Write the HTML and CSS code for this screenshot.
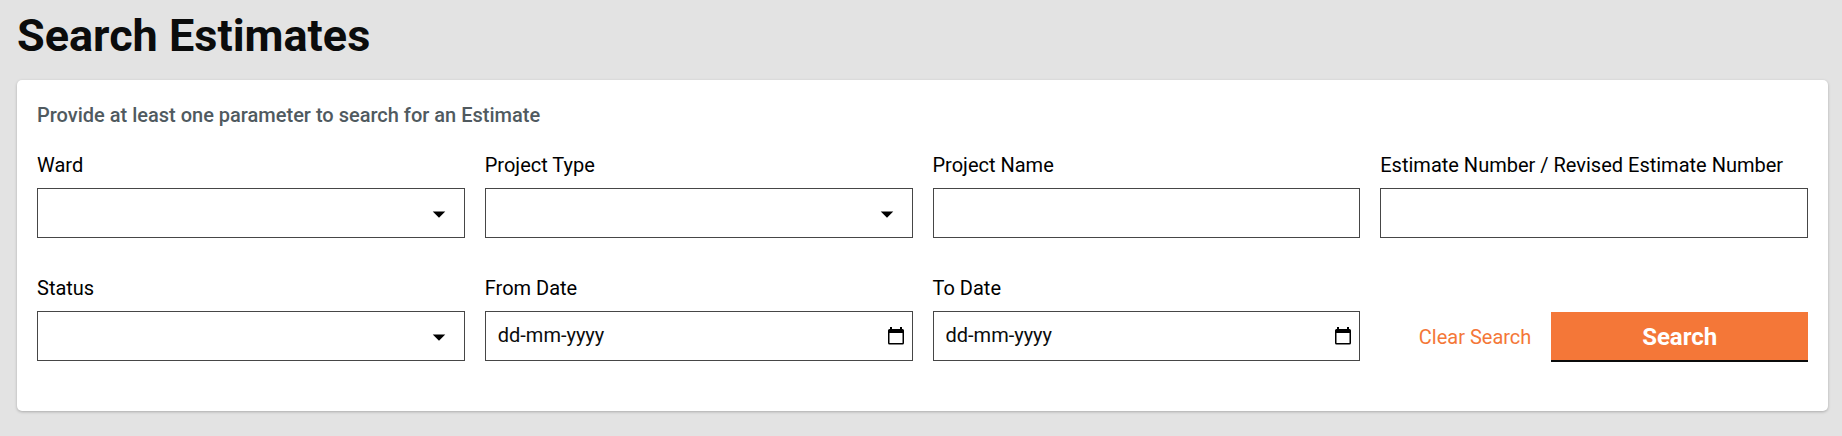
FILE: index.html
```html
<!DOCTYPE html>
<html lang="en">
<head>
<meta charset="utf-8">
<title>Search Estimates</title>
<link rel="stylesheet" href="styles.css">
</head>
<body>
<main class="page">
  <h1 class="page-title">Search Estimates</h1>
  <form class="card">
    <p class="hint">Provide at least one parameter to search for an Estimate</p>
    <div class="fields">
      <div class="field">
        <label class="label" for="ward">Ward</label>
        <div class="control">
          <select class="input" id="ward"><option></option></select>
          <svg class="arrow" viewBox="0 0 24 24" aria-hidden="true"><path d="M7 10l5 5 5-5z"/></svg>
        </div>
      </div>
      <div class="field">
        <label class="label" for="type">Project Type</label>
        <div class="control">
          <select class="input" id="type"><option></option></select>
          <svg class="arrow" viewBox="0 0 24 24" aria-hidden="true"><path d="M7 10l5 5 5-5z"/></svg>
        </div>
      </div>
      <div class="field">
        <label class="label" for="name">Project Name</label>
        <input class="input" id="name" type="text">
      </div>
      <div class="field">
        <label class="label" for="number">Estimate Number / Revised Estimate Number</label>
        <input class="input" id="number" type="text">
      </div>
      <div class="field">
        <label class="label" for="status">Status</label>
        <div class="control">
          <select class="input" id="status"><option></option></select>
          <svg class="arrow" viewBox="0 0 24 24" aria-hidden="true"><path d="M7 10l5 5 5-5z"/></svg>
        </div>
      </div>
      <div class="field">
        <label class="label" for="from">From Date</label>
        <div class="control">
          <input class="input input-date" id="from" type="text" placeholder="dd-mm-yyyy">
          <button class="picker" type="button" aria-label="Choose from date">
            <svg class="calendar" viewBox="0 0 16 18" aria-hidden="true"><path fill-rule="evenodd" d="M2 0h2V2h8V0h2V2h.5A1.500 1.500 0 0 1 16 3.500V16A1.500 1.500 0 0 1 14.500 17.500H1.500A1.500 1.500 0 0 1 0 16V3.500A1.500 1.500 0 0 1 1.500 2H2zM1.500 6v10h13V6z"/></svg>
          </button>
        </div>
      </div>
      <div class="field">
        <label class="label" for="to">To Date</label>
        <div class="control">
          <input class="input input-date" id="to" type="text" placeholder="dd-mm-yyyy">
          <button class="picker" type="button" aria-label="Choose to date">
            <svg class="calendar" viewBox="0 0 16 18" aria-hidden="true"><path fill-rule="evenodd" d="M2 0h2V2h8V0h2V2h.5A1.500 1.500 0 0 1 16 3.500V16A1.500 1.500 0 0 1 14.500 17.500H1.500A1.500 1.500 0 0 1 0 16V3.500A1.500 1.500 0 0 1 1.500 2H2zM1.500 6v10h13V6z"/></svg>
          </button>
        </div>
      </div>
      <div class="actions">
        <a class="clear" href="#">Clear Search</a>
        <button class="submit" type="submit">Search</button>
      </div>
    </div>
  </form>
</main>
</body>
</html>
```
FILE: styles.css
```css
* {
  box-sizing: border-box;
}

body {
  margin: 0;
  background: #e3e3e3;
  color: #0b0c0c;
  font: 20px/24px Roboto, sans-serif;
}

.page {
  padding: 8px 14px 24px 17px;
}

.page-title {
  margin: 0 0 16px;
  font-size: 45px;
  line-height: 56px;
  font-weight: 700;
}

.card {
  padding: 23px 20px 50px;
  background: #fff;
  border-radius: 5px;
  box-shadow: 0 1px 3px rgba(0, 0, 0, 0.25);
}

.hint {
  margin: 0 0 26px;
  color: #505a5f;
  font-weight: 500;
}

.fields {
  display: grid;
  grid-template-columns: repeat(4, minmax(0, 1fr));
  gap: 38px 20px;
}

.label {
  display: block;
  margin-bottom: 11px;
  color: #000;
}

.control {
  display: grid;
  align-items: center;
}

.control > * {
  grid-area: 1 / 1;
}

.input {
  display: block;
  width: 100%;
  height: 50px;
  margin: 0;
  padding: 0 12px;
  appearance: none;
  background: #fff;
  border: 1px solid #464646;
  border-radius: 0;
  color: #0b0c0c;
  font: inherit;
}

.input-date {
  padding-bottom: 2px;
}

.input::placeholder {
  color: #0b0c0c;
  opacity: 1;
}

.arrow {
  width: 30px;
  height: 30px;
  justify-self: end;
  margin: 2px 11px 0 0;
  pointer-events: none;
}

.picker {
  justify-self: end;
  margin-right: 9px;
  padding: 0;
  background: none;
  border: 0;
  cursor: pointer;
}

.calendar {
  display: block;
  width: 16px;
  height: 18px;
}

.actions {
  display: flex;
  align-items: center;
  justify-content: flex-end;
  align-self: end;
  gap: 20px;
}

.clear {
  color: #f47738;
  text-decoration: none;
}

.submit {
  width: 60%;
  height: 50px;
  padding: 2px 0 0;
  background: #f47738;
  border: 0;
  border-bottom: 2px solid #0b0c0c;
  color: #fff;
  font: 700 24px/28px Roboto, sans-serif;
  cursor: pointer;
}

.actions {
  margin-bottom: -1px;
}
```
